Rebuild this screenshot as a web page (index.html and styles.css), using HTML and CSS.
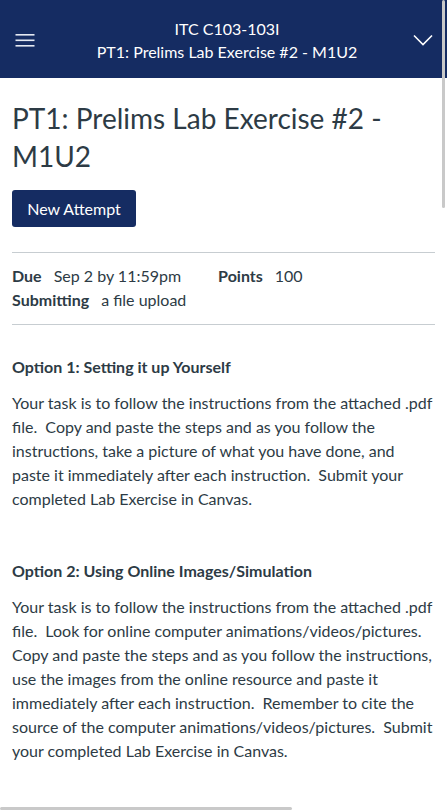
FILE: index.html
```html
<!DOCTYPE html>
<html lang="en">
<head>
<meta charset="utf-8">
<title>PT1: Prelims Lab Exercise #2 - M1U2</title>
<link rel="stylesheet" href="styles.css">
</head>
<body>
<header class="topbar">
  <div class="topbar-left">
    <svg class="hamburger" width="20" height="14" viewBox="0 0 20 14" aria-hidden="true">
      <rect x="0.5" y="1" width="19" height="1.6" fill="#e4e9f2"/>
      <rect x="0.5" y="6.5" width="19" height="1.6" fill="#e4e9f2"/>
      <rect x="0.5" y="12" width="19" height="1.6" fill="#e4e9f2"/>
    </svg>
  </div>
  <div class="topbar-title">
    <div class="course">ITC C103-103I</div>
    <div class="page">PT1: Prelims Lab Exercise #2 - M1U2</div>
  </div>
  <div class="topbar-right">
    <svg class="chevron" width="20" height="12" viewBox="0 0 20 12" aria-hidden="true">
      <polyline points="1,1.5 10,10.5 19,1.5" fill="none" stroke="#ffffff" stroke-width="1.6"/>
    </svg>
  </div>
</header>

<main class="content">
  <h1 class="title">PT1: Prelims Lab Exercise #2 - M1U2</h1>
  <button class="btn-primary">New Attempt</button>

  <div class="details">
    <div class="detail-row">
      <span class="detail"><span class="label">Due</span><span class="value">Sep 2 by 11:59pm</span></span>
      <span class="detail detail-points"><span class="label">Points</span><span class="value">100</span></span>
    </div>
    <div class="detail-row">
      <span class="detail"><span class="label">Submitting</span><span class="value">a file upload</span></span>
    </div>
  </div>

  <div class="description">
    <p><strong>Option 1: Setting it up Yourself</strong></p>
    <p>Your task is to follow the instructions from the attached .pdf file.&nbsp; Copy and paste the steps and as you follow the instructions, take a picture of what you have done, and paste it immediately after each instruction.&nbsp; Submit your completed Lab Exercise in Canvas.</p>
    <p>&nbsp;</p>
    <p><strong>Option 2: Using Online Images/Simulation</strong></p>
    <p>Your task is to follow the instructions from the attached .pdf file.&nbsp; Look for online computer animations/videos/pictures.&nbsp; Copy and paste the steps and as you follow the instructions, use the images from the online resource and paste it immediately after each instruction.&nbsp; Remember to cite the source of the computer animations/videos/pictures.&nbsp; Submit your completed Lab Exercise in Canvas.</p>
  </div>
</main>

<div class="scroll-v"></div>
<div class="scroll-h"></div>
</body>
</html>
```

FILE: styles.css
```css
html, body {
  margin: 0;
  padding: 0;
  background: #ffffff;
}
body {
  font-family: Lato, "Open Sans", sans-serif;
  color: #2d3b45;
  width: 447px;
  height: 812px;
  overflow: hidden;
}
.topbar {
  height: 78px;
  background: #152c62;
  color: #ffffff;
  display: grid;
  grid-template-columns: 48px 1fr 41px;
  align-items: center;
}
.topbar-left {
  display: flex;
  justify-content: flex-start;
  padding-left: 15px;
  padding-top: 2px;
}
.hamburger { display: block; }
.topbar-title {
  text-align: center;
  font-size: 16px;
  line-height: 23px;
  padding-top: 1px;
}
.topbar-right {
  display: flex;
  justify-content: flex-start;
  padding-left: 7px;
  padding-top: 1px;
}
.chevron { display: block; }

.content {
  padding: 0 12px;
}
.title {
  margin: 21px 0 15px;
  font-size: 28px;
  line-height: 38px;
  font-weight: 400;
  color: #2d3b45;
}
.btn-primary {
  display: block;
  height: 37px;
  width: 124px;
  padding: 0;
  border: 0;
  border-radius: 3px;
  background: #152c62;
  color: #ffffff;
  font-family: Lato, "Open Sans", sans-serif;
  font-size: 16px;
}
.details {
  margin-top: 25px;
  border-top: 1px solid #c7cdd1;
  border-bottom: 1px solid #c7cdd1;
  padding: 11px 0 12px;
  font-size: 16px;
  line-height: 24px;
}
.detail-row {
  display: flex;
}
.detail {
  display: inline-flex;
}
.detail-points {
  margin-left: 37px;
}
.label {
  font-weight: 700;
  margin-right: 12px;
}
.description {
  padding-top: 18px;
  font-size: 16px;
  line-height: 24px;
}
.description p {
  margin: 12px 0;
}
.description p strong {
  font-weight: 700;
}
.scroll-v {
  position: absolute;
  left: 442px;
  top: 0;
  width: 3px;
  height: 208px;
  background: #c9c9c9;
  border-radius: 2px;
}
.scroll-h {
  position: absolute;
  left: 0;
  top: 807px;
  width: 292px;
  height: 3px;
  background: #c9c9c9;
  border-radius: 2px;
}
```
